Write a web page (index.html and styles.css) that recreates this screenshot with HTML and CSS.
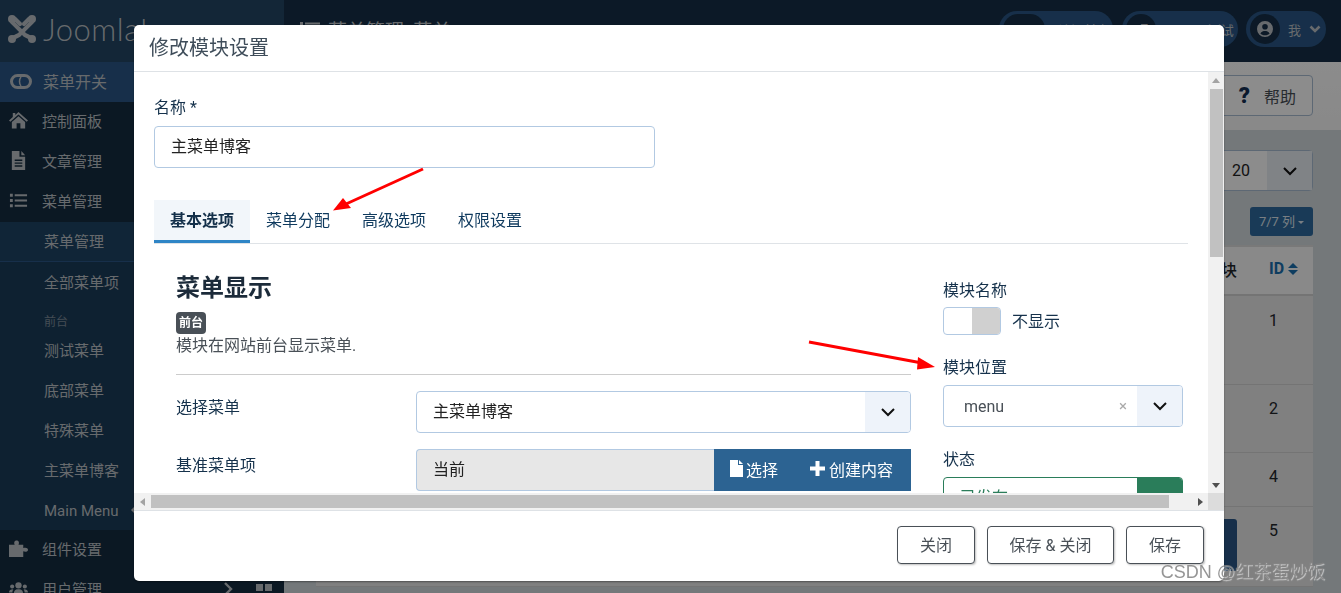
FILE: index.html
```html
<!DOCTYPE html>
<html lang="zh-CN">
<head>
<meta charset="UTF-8">
<title>菜单管理: 菜单</title>
<link rel="stylesheet" href="styles.css">
</head>
<body>

<div class="page">
  <aside class="sidebar">
    <div class="logo">
      <svg class="logo-mark" viewBox="0 0 32 32" width="32" height="32">
        <g fill="none" stroke="#bcc1c6" stroke-width="4.2" stroke-linecap="round">
          <path d="M6 9 C10 13 13 16 19 22 L25 25"/>
          <path d="M26 9 C22 13 19 16 13 22 L7 25"/>
          <path d="M9 6 L14 11"/>
          <path d="M23 6 L18 11"/>
        </g>
        <g fill="#bcc1c6">
          <circle cx="6" cy="6" r="4"/><circle cx="26" cy="6" r="4"/>
          <circle cx="6" cy="26" r="4"/><circle cx="26" cy="26" r="4"/>
        </g>
      </svg>
      <span class="logo-text">Joomla!</span>
    </div>
    <div class="toggle-row">
      <svg class="toggle-icon" viewBox="0 0 22 15" width="22" height="15"><rect x="1.5" y="1.5" width="19" height="12" rx="6" fill="none" stroke="#bcc1c6" stroke-width="3"/><path d="M11 3 C9 5.500 9 9.500 11 12" fill="none" stroke="#bcc1c6" stroke-width="1.500"/></svg>
      <span>菜单开关</span>
    </div>
    <div class="nav-item">
      <svg class="nav-icon" viewBox="0 0 20 18"><path d="M10 0 L20 9 L18.6 10.4 L10 2.8 L1.4 10.4 L0 9 L4 5.4 V1 H6.6 V3.1 Z" /><path d="M10 4.4 L17 10.6 V17.5 H12 V12 H8 V17.5 H3 V10.6 Z"/></svg>
      <span>控制面板</span>
    </div>
    <div class="nav-item">
      <svg class="nav-icon" viewBox="0 0 20 20"><path fill-rule="evenodd" d="M3 0 H11 V6 H17 V20 H3 Z M13 0 L17 4.5 H13 Z M6 9 V10.5 H14 V9 Z M6 12 V13.5 H14 V12 Z M6 15 V16.5 H14 V15 Z"/></svg>
      <span>文章管理</span>
    </div>
    <div class="nav-item">
      <svg class="nav-icon" viewBox="0 0 20 16"><path d="M1 1 H4 V4 H1 Z M6 1.5 H19 V3.5 H6 Z M1 6.5 H4 V9.5 H1 Z M6 7 H19 V9 H6 Z M1 12 H4 V15 H1 Z M6 12.5 H19 V14.5 H6 Z"/></svg>
      <span>菜单管理</span>
    </div>
    <div class="submenu">
      <div class="sub-item sub-current">菜单管理</div>
      <div class="sub-item">全部菜单项</div>
      <div class="sub-title">前台</div>
      <div class="sub-item">测试菜单</div>
      <div class="sub-item">底部菜单</div>
      <div class="sub-item">特殊菜单</div>
      <div class="sub-item">主菜单博客</div>
      <div class="sub-item">Main Menu<span class="sub-mark"></span></div>
    </div>
    <div class="nav-item">
      <svg class="nav-icon" viewBox="0 0 20 18"><path d="M0 5 H6 C5 3 5.5 .5 8 .5 C10.5 .5 11 3 10 5 H15 V8.6 C17 7.6 20 8 20 10.3 C20 12.6 17 13 15 12 V18 H0 Z"/></svg>
      <span>组件设置</span>
    </div>
    <div class="nav-item">
      <svg class="nav-icon" viewBox="0 0 24 18"><circle cx="12" cy="5" r="4"/><circle cx="4" cy="6.5" r="2.6"/><circle cx="20" cy="6.5" r="2.6"/><path d="M6 17 C6 11 8.5 10 12 10 C15.5 10 18 11 18 17 Z M0 14 C0 11 2 10 5.5 10 C4.5 11.5 4.3 13 4.3 14 Z M24 14 C24 11 22 10 18.5 10 C19.5 11.5 19.7 13 19.7 14 Z"/></svg>
      <span>用户管理</span>
      <svg class="nav-chevron" viewBox="0 0 10 16" width="10" height="16"><path d="M2 2 L8 8 L2 14" fill="none" stroke="#bcc1c6" stroke-width="2.4"/></svg>
      <span class="nav-grid"><i></i><i></i><i></i><i></i></span>
    </div>
  </aside>

  <main class="main">
    <header class="topbar">
      <div class="page-title">
        <svg class="title-icon" viewBox="0 0 20 16" width="20" height="16"><path d="M0 1 H3 V4 H0 Z M5 1.5 H20 V3.5 H5 Z M0 6.5 H3 V9.5 H0 Z M5 7 H20 V9 H5 Z M0 12 H3 V15 H0 Z M5 12.5 H20 V14.5 H5 Z"/></svg>
        <span>菜单管理: 菜单</span>
      </div>
      <span class="version">4.1.0</span>
      <div class="pill pill-site"><span class="pill-circle">⌂ 2</span><span>访问前台</span></div>
      <div class="pill pill-test"><span class="pill-circle">▞</span><span>Joomla测试</span></div>
      <div class="pill pill-user">
        <span class="pill-circle avatar">
          <svg viewBox="0 0 16 16" width="16" height="16"><path fill-rule="evenodd" fill="#bcc1c6" d="M8 0 A8 8 0 1 1 8 16 A8 8 0 1 1 8 0 Z M8 3 A2.8 2.8 0 1 0 8 8.6 A2.8 2.8 0 1 0 8 3 Z M3.4 12.4 C5 14.8 11 14.8 12.6 12.4 C11.6 10.6 9.6 10 8 10 C6.4 10 4.4 10.6 3.4 12.4 Z"/></svg>
        </span>
        <span>我</span>
        <svg viewBox="0 0 12 8" width="12" height="8"><path d="M1.5 1.5 L6 6 L10.500 1.500" fill="none" stroke="#bcc1c6" stroke-width="2.6"/></svg>
      </div>
    </header>

    <div class="toolbar">
      <button class="help-btn"><b>?</b><span>帮助</span></button>
    </div>

    <section class="content">
      <div class="limit-row">
        <div class="limit-select"><span>20</span><span class="limit-arrow"><svg viewBox="0 0 16 10" width="16" height="10"><path d="M2 2 L8 8 L14 2" fill="none" stroke="#111" stroke-width="2"/></svg></span></div>
      </div>
      <div class="col-row"><button class="col-btn">7/7 列<i class="caret"></i></button></div>
      <div class="list-table">
        <div class="tr th"><span class="cell-module">模块</span><span class="cell-id">ID <i class="sort"></i></span></div>
        <div class="tr row-1"><span class="cell-module"></span><span class="cell-id">1</span></div>
        <div class="tr row-2"><span class="cell-module"></span><span class="cell-id">2</span></div>
        <div class="tr row-3"><span class="cell-module"></span><span class="cell-id">4</span></div>
        <div class="tr row-4"><span class="cell-module"><i class="module-btn"></i></span><span class="cell-id">5</span></div>
      </div>
    </section>
  </main>
</div>

<div class="backdrop"></div>

<div class="modal">
  <div class="modal-head">修改模块设置</div>

  <div class="modal-frame">
    <div class="modal-view">
      <div class="modal-body">
        <label class="field-label">名称 *</label>
        <div class="input name-input">主菜单博客</div>

        <div class="tabs">
          <div class="tab active">基本选项</div>
          <div class="tab">菜单分配</div>
          <div class="tab">高级选项</div>
          <div class="tab">权限设置</div>
        </div>

        <div class="pane">
          <div class="pane-left">
            <h3 class="pane-title">菜单显示</h3>
            <span class="badge">前台</span>
            <p class="pane-desc">模块在网站前台显示菜单.</p>
            <hr class="pane-rule">
            <div class="form-row">
              <label class="row-label">选择菜单</label>
              <div class="input select-box"><span>主菜单博客</span><span class="select-arrow"><svg viewBox="0 0 16 10" width="16" height="10"><path d="M2 2 L8 8 L14 2" fill="none" stroke="#111" stroke-width="2"/></svg></span></div>
            </div>
            <div class="form-row">
              <label class="row-label">基准菜单项</label>
              <div class="input-group">
                <div class="group-text">当前</div>
                <div class="group-btns">
                  <span class="group-btn"><svg viewBox="0 0 13 17" width="13" height="17"><path d="M0 0 H8 V5 H13 V17 H0 Z M9 0 L13 4 H9 Z" fill="#fff"/></svg>选择</span>
                  <span class="group-btn"><svg class="plus" viewBox="0 0 15 15" width="15" height="15"><path d="M5.500 0 H9.500 V5.500 H15 V9.500 H9.500 V15 H5.500 V9.500 H0 V5.500 H5.500 Z" fill="#fff"/></svg>创建内容</span>
                </div>
              </div>
            </div>
          </div>

          <div class="pane-right">
            <label class="field-label">模块名称</label>
            <div class="switch-row">
              <span class="switch"><i></i></span>
              <span class="switch-text">不显示</span>
            </div>
            <label class="field-label label-gap">模块位置</label>
            <div class="input select-box pos-select">
              <span>menu</span>
              <span class="clear-x">×</span>
              <span class="select-arrow"><svg viewBox="0 0 16 10" width="16" height="10"><path d="M2 2 L8 8 L14 2" fill="none" stroke="#111" stroke-width="2"/></svg></span>
            </div>
            <label class="field-label label-gap">状态</label>
            <div class="input select-box state-select"><span>已发布</span><span class="select-arrow"></span></div>
          </div>
        </div>
      </div>
    </div>

    <div class="vbar">
      <i class="tri tri-up"></i>
      <div class="vtrack"><div class="vthumb"></div></div>
      <i class="tri tri-down"></i>
    </div>
    <div class="hbar">
      <i class="tri tri-left"></i>
      <div class="htrack"><div class="hthumb"></div></div>
      <i class="tri tri-right"></i>
    </div>
    <div class="corner"></div>
  </div>

  <div class="modal-foot">
    <button class="foot-btn">关闭</button>
    <button class="foot-btn foot-wide">保存 &amp; 关闭</button>
    <button class="foot-btn">保存</button>
  </div>
</div>

<!-- red arrows drawn on top of the screenshot -->
<svg class="marks" viewBox="0 0 1341 593" width="1341" height="593">
  <path d="M423 169 L346 204" stroke="#f00" stroke-width="3" fill="none"/>
  <path d="M333 210.500 L343 198 L351 208 Z" fill="#f00"/>
  <path d="M809 342 L922 363" stroke="#f00" stroke-width="3" fill="none"/>
  <path d="M935 367 L918 357 L917 369.500 Z" fill="#f00"/>
</svg>

<div class="watermark">CSDN @红茶蛋炒饭</div>

</body>
</html>
```

FILE: styles.css
```css
html, body {
  margin: 0;
  padding: 0;
  height: 100%;
  overflow: hidden;
  font-family: Roboto, "Noto Sans CJK SC", sans-serif;
  font-size: 16px;
  background-color: #d3dade;
}
button {
  font-family: inherit;
}

/* page behind the modal */
.page {
  display: flex;
  width: 1341px;
  height: 593px;
  overflow: hidden;
}
.sidebar {
  flex: 0 0 284px;
  background-color: #142c41;
  color: #bcc1c6;
  font-size: 15px;
  overflow: hidden;
}
.logo {
  height: 62px;
  background-color: #234564;
  display: flex;
  align-items: center;
  padding: 0 0 4px 6px;
  gap: 5px;
  box-sizing: border-box;
}
.logo-text {
  font-family: Lato, sans-serif;
  font-weight: 300;
  font-size: 31px;
  letter-spacing: 0.5px;
}
.toggle-row {
  height: 40px;
  background-color: #2a5787;
  display: flex;
  align-items: center;
  gap: 11px;
  padding: 0 0 2px 10px;
  box-sizing: border-box;
  font-size: 16px;
}
.nav-item {
  height: 40px;
  display: flex;
  align-items: center;
  box-sizing: border-box;
  padding: 0 0 3px 9px;
  gap: 14px;
  white-space: nowrap;
}
.nav-icon {
  width: 19px;
  height: 19px;
  flex: none;
  fill: #bcc1c6;
}
.nav-chevron {
  margin-left: 107px;
  flex: none;
}
.nav-grid {
  display: grid;
  grid-template-columns: 7px 7px;
  gap: 2px;
  margin: 6px 0 0 9px;
  flex: none;
}
.nav-grid i {
  height: 7px;
  background-color: #bcc1c6;
}
.submenu {
  background-color: #1b3c59;
}
.sub-item {
  height: 40px;
  line-height: 42px;
  padding-left: 44px;
  position: relative;
}
.sub-current {
  line-height: 40px;
  background-color: #1e4464;
  box-shadow: inset 0 -1px 0 0 #2a5787;
}
.sub-title {
  height: 28px;
  line-height: 40px;
  padding-left: 44px;
  font-size: 12px;
  opacity: 0.6;
}
.sub-mark {
  position: absolute;
  left: 131px;
  top: 16px;
  border: 4px solid transparent;
  border-right-color: #bcc1c6;
  border-left: 0;
}

.main {
  flex: 1;
  min-width: 0;
  display: flex;
  flex-direction: column;
}
.topbar {
  height: 62px;
  background-color: #162f47;
  color: #bcc1c6;
  display: flex;
  align-items: center;
  padding: 0 15px 4px 16px;
  box-sizing: border-box;
  font-size: 13px;
  white-space: nowrap;
}
.page-title {
  display: flex;
  align-items: center;
  gap: 8px;
  font-size: 19px;
  margin-right: auto;
}
.title-icon {
  fill: #bcc1c6;
}
.version {
  margin-right: 25px;
  font-size: 13px;
}
.pill {
  height: 36px;
  border-radius: 18px;
  background-color: #2a5787;
  display: flex;
  align-items: center;
  box-sizing: border-box;
  padding-left: 4px;
  gap: 13px;
  overflow: hidden;
}
.pill-site {
  width: 114px;
  margin-right: 9px;
}
.pill-test {
  width: 116px;
  margin-right: 8px;
  gap: 8px;
}
.pill-user {
  width: 80px;
  gap: 8px;
}
.pill-circle {
  height: 30px;
  min-width: 30px;
  border-radius: 15px;
  background-color: #162f47;
  display: flex;
  align-items: center;
  justify-content: center;
  padding: 0 5px;
  box-sizing: border-box;
  flex: none;
}
.pill-site .pill-circle {
  min-width: 42px;
}
.pill-circle.avatar {
  padding: 0;
}
.toolbar {
  height: 68px;
  box-sizing: border-box;
  background: linear-gradient(#fff, #f9f9f9);
  display: flex;
  justify-content: flex-end;
  align-items: flex-start;
  padding: 13px 28px 0 0;
}
.help-btn {
  width: 110px;
  height: 41px;
  display: flex;
  align-items: center;
  justify-content: flex-end;
  gap: 14px;
  padding: 0 16px 0 0;
  background-color: #fff;
  border: 1px solid #a9bdd3;
  border-radius: 4px;
  font-size: 16px;
  color: #495057;
}
.help-btn b {
  font-size: 22px;
  color: #132f53;
  font-weight: 900;
}
.content {
  flex: 1;
  padding: 20px 28px 0 32px;
  min-height: 0;
}
.limit-row {
  display: flex;
  justify-content: flex-end;
}
.limit-select {
  width: 120px;
  height: 41px;
  box-sizing: border-box;
  display: flex;
  align-items: center;
  justify-content: flex-end;
  color: #222;
  background-color: #fff;
  border: 1px solid #a9bdd3;
  border-radius: 4px;
}
.limit-arrow {
  width: 45px;
  height: 100%;
  margin-left: 17px;
  background-color: #e9eef4;
  display: flex;
  align-items: center;
  justify-content: center;
}
.col-row {
  display: flex;
  justify-content: flex-end;
  margin-top: 16px;
}
.col-btn {
  width: 63px;
  height: 29px;
  padding: 0 0 2px;
  border: 0;
  border-radius: 3px;
  background-color: #2f6a9f;
  color: #dde6ee;
  font-size: 13px;
}
.caret {
  display: inline-block;
  margin-left: 3px;
  vertical-align: 2px;
  border: 3px solid transparent;
  border-top-color: #dde6ee;
  border-bottom: 0;
}
.list-table {
  margin-top: 9px;
  background-color: #e9e9e9;
}
.tr {
  display: flex;
  justify-content: flex-end;
  border-bottom: 1px solid #d4d4d4;
  box-sizing: border-box;
  color: #212529;
}
.th {
  height: 51px;
  padding-bottom: 4px;
  background-color: #f9f9f9;
  border-top: 2px solid #dcdcdc;
  border-bottom-width: 2px;
  font-weight: 500;
  align-items: center;
}
.row-1 { height: 89px; padding-top: 15px; }
.row-2 { height: 68px; padding-top: 14px; }
.row-3 { height: 54px; padding-top: 14px; }
.row-4 { height: 80px; padding-top: 14px; }
.cell-module {
  width: 40px;
  text-align: right;
  position: relative;
}
.cell-id {
  width: 76px;
  padding-left: 32px;
  box-sizing: border-box;
}
.th .cell-id {
  color: #1a6fb0;
  font-weight: 700;
  white-space: nowrap;
}
.sort {
  display: inline-block;
  width: 10px;
  height: 12px;
  vertical-align: -1px;
  position: relative;
}
.sort::before, .sort::after {
  content: "";
  position: absolute;
  left: 0;
  border: 5px solid transparent;
}
.sort::before {
  top: 0;
  border-bottom-color: #1a6fb0;
  border-top: 0;
}
.sort::after {
  bottom: 0;
  border-top-color: #1a6fb0;
  border-bottom: 0;
}
.module-btn {
  position: absolute;
  right: 0;
  top: -2px;
  width: 60px;
  height: 52px;
  background-color: #2a5787;
  border-radius: 3px;
}

.backdrop {
  position: fixed;
  top: 0;
  left: 0;
  right: 0;
  bottom: 0;
  background-color: rgba(0,0,0,0.45);
}

/* modal */
.modal {
  position: fixed;
  left: 134px;
  top: 25px;
  width: 1090px;
  height: 556px;
  background-color: white;
  border-radius: 5px;
  overflow: hidden;
  display: flex;
  flex-direction: column;
  box-shadow: 0 1px 2px rgba(0,0,0,0.4);
}
.modal-head {
  height: 47px;
  box-sizing: border-box;
  padding: 0 15px;
  line-height: 47px;
  font-size: 20px;
  color: #3f4d5a;
  border-bottom: 1px solid #dee2e6;
}
.modal-frame {
  display: grid;
  grid-template-columns: 1074px 16px;
  grid-template-rows: 421px 17px;
  border-bottom: 1px solid #dee2e6;
}
.modal-view {
  overflow: hidden;
}
.modal-body {
  padding: 24px 20px 0;
  color: #16324c;
}
.field-label {
  display: block;
  line-height: 24px;
}
.input {
  box-sizing: border-box;
  border: 1px solid #b2c9e2;
  border-radius: 4px;
  height: 42px;
  line-height: 40px;
  color: #222;
  background-color: white;
}
.name-input {
  width: 501px;
  margin-top: 6px;
  padding-left: 16px;
}
.tabs {
  display: flex;
  margin-top: 32px;
  height: 44px;
  border-bottom: 1px solid #dfe3e7;
  box-sizing: border-box;
}
.tab {
  width: 96px;
  text-align: center;
  line-height: 42px;
  color: #0f3a5e;
}
.tab.active {
  height: 43px;
  box-sizing: border-box;
  background-color: #f2f6fa;
  border-bottom: 3px solid #2f85c6;
  font-weight: 700;
  color: #14304a;
}
.pane {
  display: flex;
  gap: 32px;
  padding: 28px 5px 0 22px;
}
.pane-left {
  width: 735px;
}
.pane-right {
  width: 240px;
  margin-top: 7px;
}
.pane-title {
  margin: 0;
  font-size: 24px;
  line-height: 32px;
  font-weight: 700;
  color: #1c2b3a;
}
.badge {
  display: inline-block;
  margin-top: 8px;
  width: 30px;
  height: 22px;
  line-height: 22px;
  text-align: center;
  font-size: 12px;
  font-weight: 700;
  color: white;
  background-color: #495057;
  border-radius: 4px;
  vertical-align: top;
}
.pane-desc {
  margin: 0;
  line-height: 24px;
  color: #495057;
}
.pane-rule {
  border: 0;
  border-top: 1px solid #ccc;
  margin: 16px 0;
}
.form-row {
  display: flex;
  margin-bottom: 16px;
}
.row-label {
  width: 240px;
  line-height: 33px;
}
.select-box {
  display: flex;
  justify-content: space-between;
  overflow: hidden;
  padding-left: 16px;
  flex: 1;
}
.select-arrow {
  flex: none;
  width: 45px;
  height: 40px;
  background-color: #eef3fa;
  display: flex;
  align-items: center;
  justify-content: center;
}
.input-group {
  flex: 1;
  height: 42px;
  display: flex;
}
.group-text {
  flex: 1;
  box-sizing: border-box;
  padding-left: 16px;
  line-height: 39px;
  color: #222;
  background-color: #e7e7e7;
  border: 1px solid #b2c9e2;
  border-right: 0;
  border-radius: 4px 0 0 4px;
}
.group-btns {
  flex: 0 0 197px;
  display: flex;
  align-items: center;
  justify-content: space-between;
  box-sizing: border-box;
  padding: 0 18px 3px 16px;
  background-color: #2c6392;
  color: white;
}
.group-btn {
  display: flex;
  align-items: center;
  gap: 3px;
}
.group-btn .plus {
  margin-right: 1px;
}
.switch-row {
  display: flex;
  align-items: center;
  gap: 11px;
  margin-top: 4px;
}
.switch-text {
  margin-top: -2px;
}
.switch {
  box-sizing: border-box;
  width: 58px;
  height: 28px;
  border: 1px solid #b2c9e2;
  border-radius: 4px;
  display: flex;
  justify-content: flex-end;
  overflow: hidden;
}
.switch i {
  width: 28px;
  background-color: #d0d0d0;
}
.label-gap {
  margin-top: 21px;
}
.pos-select, .state-select {
  margin-top: 5px;
  flex: none;
}
.pos-select {
  padding-left: 20px;
  color: #495057;
  line-height: 41px;
}
.clear-x {
  margin-left: auto;
  margin-right: 10px;
  color: #aaa;
  font-size: 15px;
}
.state-select {
  border-color: #2a7d5a;
  color: #2a7d5a;
}
.state-select .select-arrow {
  background-color: #2a7d5a;
}

/* scrollbars, drawn so they look the same everywhere */
.vbar {
  background-color: #f1f1f1;
  display: flex;
  flex-direction: column;
  align-items: center;
  width: 16px;
}
.vtrack {
  flex: 1;
  width: 100%;
  padding: 0 1px 0 2px;
  box-sizing: border-box;
  margin: 6px 0;
}
.vthumb {
  height: 168px;
  background-color: #c1c1c1;
}
.hbar {
  background-color: #f1f1f1;
  display: flex;
  align-items: center;
  padding: 0 5px 0 6px;
}
.htrack {
  flex: 1;
  margin: 0 6px;
}
.hthumb {
  width: 1018px;
  height: 13px;
  background-color: #c1c1c1;
}
.corner {
  background-color: #dcdcdc;
}
.tri {
  display: block;
  flex: none;
  width: 0;
  height: 0;
  border: 4px solid transparent;
}
.tri-up {
  margin-top: 6px;
  border-top: 0;
  border-bottom: 5px solid #a3a3a3;
}
.tri-down {
  margin-bottom: 5px;
  border-bottom: 0;
  border-top: 5px solid #505050;
}
.tri-left {
  border-left: 0;
  border-right: 5px solid #a3a3a3;
}
.tri-right {
  border-right: 0;
  border-left: 5px solid #505050;
}

.modal-foot {
  flex: 1;
  display: flex;
  justify-content: flex-end;
  align-items: center;
  gap: 12px;
  padding: 0 20px 2px 0;
}
.foot-btn {
  height: 38px;
  padding: 0 22px 2px;
  font-size: 16px;
  color: #495057;
  background-color: white;
  border: 1px solid #495057;
  border-radius: 4px;
  box-shadow: 1px 1px 2px rgba(0,0,0,0.25);
}
.foot-wide {
  width: 127px;
  padding: 0 0 2px;
}

/* things lying over the page */
.marks {
  position: fixed;
  top: 0;
  left: 0;
}
.watermark {
  position: fixed;
  right: 16px;
  top: 558px;
  font-family: "Liberation Sans", "Noto Sans CJK SC", sans-serif;
  font-size: 18px;
  line-height: 28px;
  color: rgba(130,130,130,0.85);
  text-shadow: 1px 1px 1px rgba(255,255,255,0.6);
  white-space: nowrap;
}
```
